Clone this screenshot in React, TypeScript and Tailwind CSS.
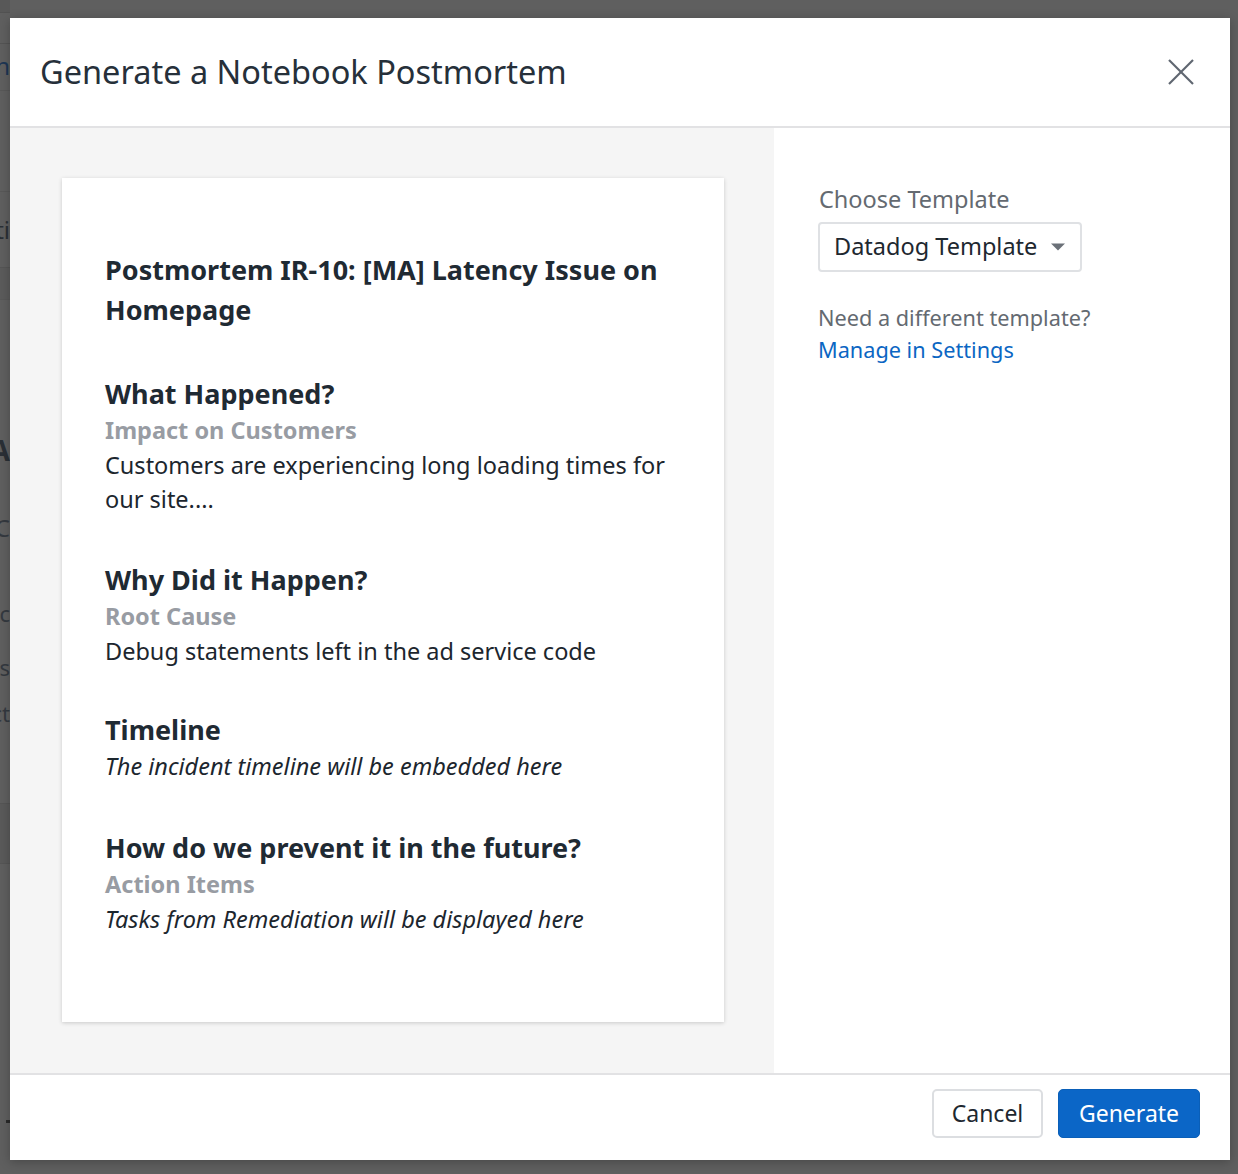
import React from 'react'

// Faint bits of the page behind the overlay (only a 10px sliver is visible)
function BackgroundPage() {
  return (
    <div className="flex w-[10px] flex-col overflow-hidden text-[#2a2f35]">
      <div className="h-[13px] shrink-0 border-b border-[#525252] bg-[#585858]" />
      <div className="h-[31px] shrink-0 border-b border-[#545454]" />
      <div className="flex h-[47px] shrink-0 items-center justify-end border-b border-[#585858] pb-[2px] text-[24px] leading-none text-[#1d3654]">
        n
      </div>
      <div className="h-[101px] shrink-0 border-b border-[#585858]" />
      <div className="flex h-[76px] shrink-0 items-center justify-end border-b border-[#555555] text-[24px] leading-none">
        <span className="whitespace-nowrap">ti</span>
      </div>
      <div className="h-[32px] shrink-0 border-b border-[#585858] bg-[#5b5b5b]" />
      <div className="flex h-[504px] shrink-0 flex-col items-end border-b border-[#555555]">
        <div className="mt-[136px] text-[28px] font-bold leading-none">A</div>
        <div className="mt-[52px] text-[24px] leading-none text-[#34393f]">C</div>
        <div className="mt-[62px] text-[22px] leading-none text-[#34393f]">c</div>
        <div className="mt-[32px] text-[22px] leading-none text-[#34393f]">s</div>
        <div className="mt-[24px] whitespace-nowrap text-[22px] leading-none text-[#34393f]">ct</div>
      </div>
      <div className="h-[60px] shrink-0 border-b border-[#555555] bg-[#5a5a5a]" />
      <div className="flex flex-col items-end">
        <div className="mt-[256px] h-[3px] w-[4px] bg-[#2a2a2a]" />
      </div>
    </div>
  )
}

function Section({
  title,
  sub,
  children,
  className,
}: {
  title: string
  sub?: string
  children: React.ReactNode
  className?: string
}) {
  return (
    <div className={className}>
      <h3 className="text-[27px] font-bold leading-[36px] text-[#1f2a33]">{title}</h3>
      {sub && (
        <div className="text-[23.5px] font-bold leading-[36px] text-[#989ca3]">{sub}</div>
      )}
      {children}
    </div>
  )
}

export default function App() {
  return (
    <div className="relative h-[1174px] w-[1238px] overflow-hidden bg-[#5f5f5f] font-['Noto_Sans',sans-serif]">
      <BackgroundPage />

      {/* Modal */}
      <div className="absolute left-[10px] top-[18px] flex h-[1142px] w-[1220px] flex-col bg-white shadow-[0_2px_10px_rgba(0,0,0,0.25)]">
        {/* Header */}
        <div className="flex h-[110px] shrink-0 items-center justify-between border-b-2 border-[#e2e2e4] pl-[30px] pr-[36px]">
          <h2 className="text-[32.5px] font-normal leading-none text-[#26303a]">
            Generate a Notebook Postmortem
          </h2>
          <button aria-label="Close" className="flex h-[26px] w-[26px] items-center justify-center">
            <svg width="26" height="26" viewBox="0 0 26 26" fill="none" stroke="#5f6670" strokeWidth="2.2">
              <line x1="1" y1="1" x2="25" y2="25" />
              <line x1="25" y1="1" x2="1" y2="25" />
            </svg>
          </button>
        </div>

        {/* Body */}
        <div className="flex min-h-0 flex-1">
          {/* Preview */}
          <div className="w-[764px] shrink-0 bg-[#f5f5f5] px-[52px] py-[50px]">
            <div className="h-[844px] w-[662px] bg-white px-[43px] pt-[72px] shadow-[0_1px_4px_rgba(0,0,0,0.18)]">
              <h1 className="text-[27px] font-bold leading-[40px] text-[#1f2a33]">
                Postmortem IR-10: [MA] Latency Issue on Homepage
              </h1>

              <Section title="What Happened?" sub="Impact on Customers" className="mt-[46px]">
                <p className="text-[23.5px] leading-[34px] text-[#1c262e]">
                  Customers are experiencing long loading times for our site....
                </p>
              </Section>

              <Section title="Why Did it Happen?" sub="Root Cause" className="mt-[46px]">
                <p className="text-[23.5px] leading-[34px] text-[#1c262e]">
                  Debug statements left in the ad service code
                </p>
              </Section>

              <Section title="Timeline" className="mt-[44px]">
                <p className="text-[23.5px] italic leading-[36px] text-[#1c262e]">
                  The incident timeline will be embedded here
                </p>
              </Section>

              <Section title="How do we prevent it in the future?" sub="Action Items" className="mt-[46px]">
                <p className="text-[23.5px] italic leading-[34px] text-[#1c262e]">
                  Tasks from Remediation will be displayed here
                </p>
              </Section>
            </div>
          </div>

          {/* Options */}
          <div className="flex-1 pl-[44px] pt-[56px]">
            <div className="pl-[1px] text-[23.5px] leading-[30px] text-[#646a71]">Choose Template</div>
            <button className="mt-[8px] flex h-[50px] w-[264px] items-center justify-between rounded-[4px] border-2 border-[#dfe1e4] bg-white pl-[14px] pr-[14px]">
              <span className="text-[23.5px] leading-none text-[#1e2830]">Datadog Template</span>
              <svg width="16" height="8" viewBox="0 0 16 8" fill="#6b7178">
                <polygon points="1,0.5 15,0.5 8,7.5" />
              </svg>
            </button>
            <div className="mt-[30px] text-[21.7px] leading-[32px] text-[#646a71]">Need a different template?</div>
            <a className="block text-[21.7px] leading-[32px] text-[#0b66c3]">Manage in Settings</a>
          </div>
        </div>

        {/* Footer */}
        <div className="flex h-[87px] shrink-0 items-start justify-end gap-[15px] border-t-2 border-[#e2e2e4] pr-[30px] pt-[14px]">
          <button className="h-[49px] w-[111px] rounded-[5px] border-2 border-[#dcdee1] bg-white text-[23px] text-[#1e2830]">
            Cancel
          </button>
          <button className="h-[49px] w-[142px] rounded-[5px] border border-[#0a5fb8] bg-[#0b66c7] text-[23px] text-white">
            Generate
          </button>
        </div>
      </div>
    </div>
  )
}
